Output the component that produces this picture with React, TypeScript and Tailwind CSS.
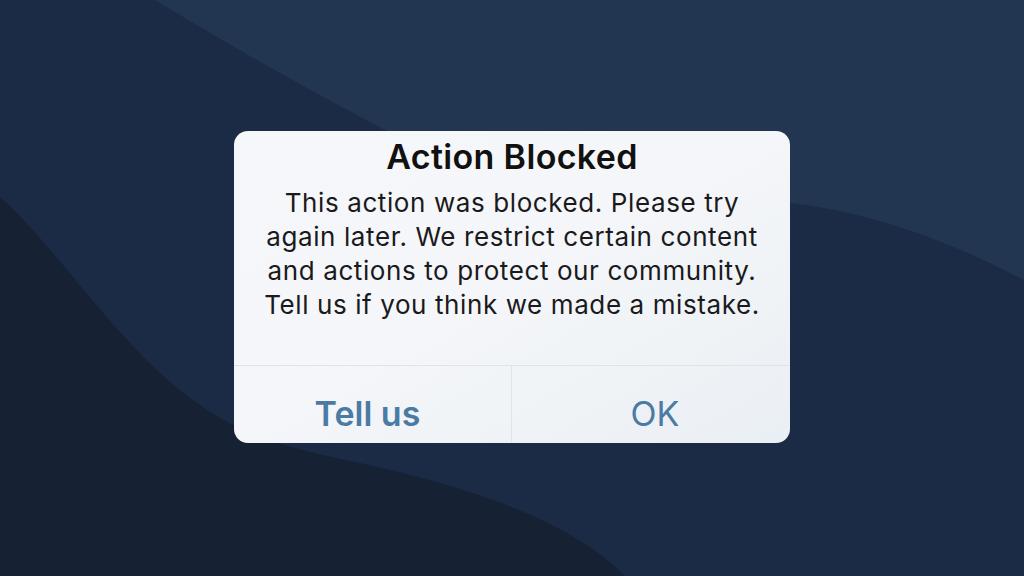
// Action Blocked alert over a layered navy wave background
function Waves() {
  return (
    <svg
      className="absolute inset-0 h-full w-full"
      viewBox="0 0 1024 576"
      preserveAspectRatio="none"
      aria-hidden="true"
    >
      <rect width="1024" height="576" fill="#1b2b46" />
      <path d="M155 0 Q270 70 400 138 L790 203 Q900 215 1024 280 L1024 0 Z" fill="#223651" />
      <path
        d="M0 197 C60 250 120 350 200 405 C250 440 300 450 360 463 C470 487 570 520 625 576 L0 576 Z"
        fill="#162234"
      />
    </svg>
  );
}

export default function App() {
  return (
    <div
      className="relative flex h-[576px] w-[1024px] items-start justify-center overflow-hidden pt-[131px]"
      style={{ fontFamily: "Inter, 'Liberation Sans', sans-serif" }}
    >
      <Waves />

      <div className="relative flex w-[556px] flex-col overflow-hidden rounded-[14px] bg-gradient-to-br from-[#f5f7fa] via-[#f4f6f9] to-[#eaeff3]">
        <div className="flex flex-col items-center px-4 pt-[5px] pb-[43px] text-center">
          <h2 className="text-[34px] leading-[42px] font-semibold tracking-[0.35px] text-[#111111]">
            Action Blocked
          </h2>
          <p className="mt-[8px] text-[26px] leading-[34px] tracking-[0.6px] text-[#1a1a1c]">
            This action was blocked. Please try
            <br />
            again later. We restrict certain content
            <br />
            and actions to protect our community.
            <br />
            Tell us if you think we made a mistake.
          </p>
        </div>

        <div className="grid h-[78px] grid-cols-2 border-t border-[#dde5eb]">
          <button className="flex items-center justify-center border-r border-[#dde5eb] pt-[18px] pr-[10px] text-[34px] font-semibold text-[#4a7ba4]">
            Tell us
          </button>
          <button className="flex items-center justify-center pt-[18px] pl-[8px] text-[34px] text-[#4a7ba4]">
            OK
          </button>
        </div>
      </div>
    </div>
  );
}
